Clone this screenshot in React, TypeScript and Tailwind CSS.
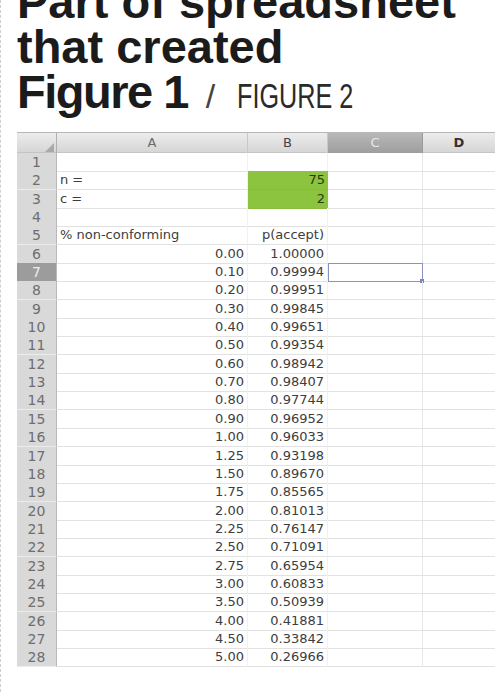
import React from "react";

type Row = { a?: string; b?: string; label?: boolean; green?: boolean };

// rows 1..28 of the sheet
const sheet: Row[] = [
  {},
  { a: "n =", b: "75", label: true, green: true },
  { a: "c =", b: "2", label: true, green: true },
  {},
  { a: "% non-conforming", b: "p(accept)", label: true },
  { a: "0.00", b: "1.00000" },
  { a: "0.10", b: "0.99994" },
  { a: "0.20", b: "0.99951" },
  { a: "0.30", b: "0.99845" },
  { a: "0.40", b: "0.99651" },
  { a: "0.50", b: "0.99354" },
  { a: "0.60", b: "0.98942" },
  { a: "0.70", b: "0.98407" },
  { a: "0.80", b: "0.97744" },
  { a: "0.90", b: "0.96952" },
  { a: "1.00", b: "0.96033" },
  { a: "1.25", b: "0.93198" },
  { a: "1.50", b: "0.89670" },
  { a: "1.75", b: "0.85565" },
  { a: "2.00", b: "0.81013" },
  { a: "2.25", b: "0.76147" },
  { a: "2.50", b: "0.71091" },
  { a: "2.75", b: "0.65954" },
  { a: "3.00", b: "0.60833" },
  { a: "3.50", b: "0.50939" },
  { a: "4.00", b: "0.41881" },
  { a: "4.50", b: "0.33842" },
  { a: "5.00", b: "0.26966" },
];

const SELECTED_ROW = 7;

const App = () => {
  return (
    <div className="w-[495px] h-[692px] overflow-hidden bg-white relative">
      {/* dashed page edge */}
      <div className="absolute left-0 top-0 h-full border-l border-dashed border-[#cfcfcf]" />

      <h1
        className="pl-[17px] mt-[-21px] text-[47px] leading-[45px] font-bold text-[#1b1b1b]"
        style={{ fontFamily: '"Liberation Sans", Arial, sans-serif' }}
      >
        <div>Part of spreadsheet</div>
        <div>that created</div>
        <div className="flex items-baseline">
          <span className="tracking-[-1.5px]">Figure 1</span>
          <span className="ml-[18px] text-[34px] font-normal text-[#444]">/</span>
          <span className="ml-[22px] inline-block origin-left scale-x-[0.72] text-[35px] font-normal text-[#2a2a2a]">
            FIGURE 2
          </span>
        </div>
      </h1>

      <div
        className="ml-[17px] mt-[13px] text-[13px] text-[#3d3d3d]"
        style={{ fontFamily: '"DejaVu Sans", Verdana, sans-serif' }}
      >
        {/* column header */}
        <div className="grid grid-cols-[40px_191px_80px_95px_1fr] h-[21px] border-t border-[#b8b8b8] border-b border-b-[#c4c4c4] bg-gradient-to-b from-[#ececec] to-[#d6d6d6] text-[#6a6a6a]">
          <div className="relative border-r border-[#b0b0b0]">
            <div className="absolute right-[2px] bottom-[1px] w-0 h-0 border-l-[9px] border-l-transparent border-b-[9px] border-b-[#a9a9a9]" />
          </div>
          <div className="flex items-center justify-center border-r border-[#c8c8c8]">A</div>
          <div className="flex items-center justify-center border-r border-[#c8c8c8] text-[#444]">B</div>
          <div className="flex items-center justify-center border-r border-[#9a9a9a] bg-gradient-to-b from-[#b8b8b8] to-[#9e9e9e] text-[#e8e8e8]">C</div>
          <div className="flex items-center justify-center text-[#333] font-bold">D</div>
        </div>

        {sheet.map((row, i) => {
          const n = i + 1;
          const sel = n === SELECTED_ROW;
          return (
            <div key={n} className="grid grid-cols-[40px_191px_80px_95px_1fr] h-[18.35px] leading-[18px]">
              <div
                className={`flex items-center justify-center border-r border-[#b9b9b9] border-b ${
                  sel ? "bg-[#9c9c9c] text-[#ededed] border-b-[#9c9c9c]" : "bg-[#d9d9d9] text-[#6e6e6e] border-b-[#ececec]"
                } text-[14px]`}
              >
                {n}
              </div>
              <div
                className={`border-b border-[#e2e2e2] border-r border-r-[#f1f1f1] px-[3px] whitespace-nowrap ${
                  row.label ? "text-left" : "text-right"
                }`}
              >
                {row.a}
              </div>
              <div
                className={`border-b px-[3px] text-right ${
                  row.green ? "bg-[#8cc43f] text-[#2c3a14] border-[#86bd3a]" : "border-[#e2e2e2] border-r border-r-[#f1f1f1]"
                }`}
              >
                {row.b}
              </div>
              <div
                className={`relative border-b border-[#e2e2e2] border-r border-r-[#e6e6e6] ${
                  sel ? "outline outline-[1.5px] outline-[#8b90c6] -outline-offset-1" : ""
                }`}
              >
                {sel && <div className="absolute right-[-2px] bottom-[-2px] w-[4px] h-[4px] bg-[#7f84bd]" />}
              </div>
              <div className="border-b border-[#e2e2e2]" />
            </div>
          );
        })}
      </div>
    </div>
  );
};

export default App;
